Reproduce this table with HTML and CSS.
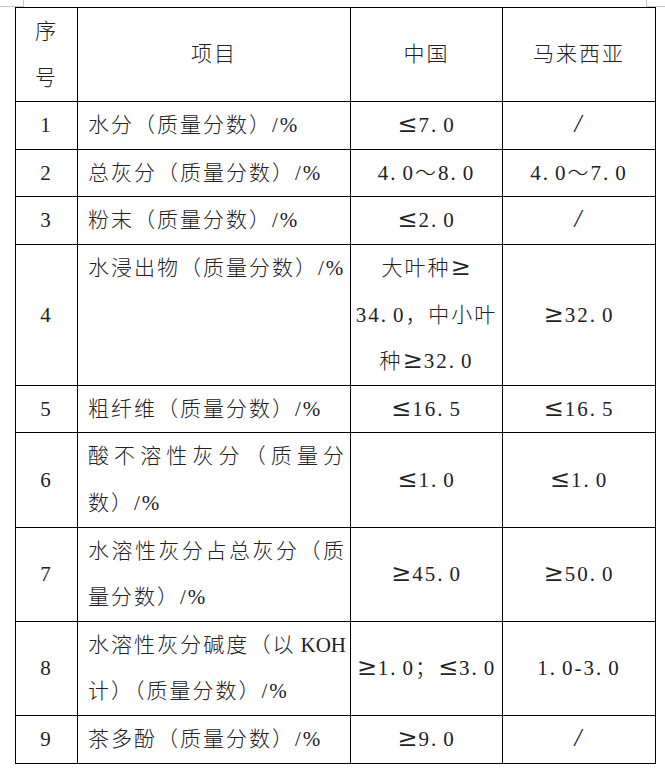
FILE: index.html
```html
<!DOCTYPE html>
<html lang="zh-CN">
<head>
<meta charset="utf-8">
<title>茶叶指标对比</title>
<link rel="stylesheet" href="styles.css">
</head>
<body>
<div class="page">
  <table class="spec">
    <colgroup>
      <col class="c-no">
      <col class="c-item">
      <col class="c-cn">
      <col class="c-my">
    </colgroup>
    <tr class="head">
      <td class="no">序号</td>
      <td class="center">项目</td>
      <td class="center">中国</td>
      <td class="center">马来西亚</td>
    </tr>
    <tr>
      <td class="no">1</td>
      <td class="item">水分（质量分数）/%</td>
      <td class="center"><span class="sym">≤</span>7<span class="pt">.</span>0</td>
      <td class="center"><span class="slash">/</span></td>
    </tr>
    <tr>
      <td class="no">2</td>
      <td class="item">总灰分（质量分数）/%</td>
      <td class="center">4<span class="pt">.</span>0～8<span class="pt">.</span>0</td>
      <td class="center">4<span class="pt">.</span>0～7<span class="pt">.</span>0</td>
    </tr>
    <tr>
      <td class="no">3</td>
      <td class="item">粉末（质量分数）/%</td>
      <td class="center"><span class="sym">≤</span>2<span class="pt">.</span>0</td>
      <td class="center"><span class="slash">/</span></td>
    </tr>
    <tr>
      <td class="no">4</td>
      <td class="item">水浸出物（质量分数）/%</td>
      <td class="center">大叶种<span class="sym">≥</span><br>34<span class="pt">.</span>0，中小叶<br>种<span class="sym">≥</span>32<span class="pt">.</span>0</td>
      <td class="center"><span class="sym">≥</span>32<span class="pt">.</span>0</td>
    </tr>
    <tr>
      <td class="no">5</td>
      <td class="item">粗纤维（质量分数）/%</td>
      <td class="center"><span class="sym">≤</span>16<span class="pt">.</span>5</td>
      <td class="center"><span class="sym">≤</span>16<span class="pt">.</span>5</td>
    </tr>
    <tr>
      <td class="no">6</td>
      <td class="item">酸不溶性灰分（质量分数）/%</td>
      <td class="center"><span class="sym">≤</span>1<span class="pt">.</span>0</td>
      <td class="center"><span class="sym">≤</span>1<span class="pt">.</span>0</td>
    </tr>
    <tr>
      <td class="no">7</td>
      <td class="item">水溶性灰分占总灰分（质量分数）/%</td>
      <td class="center"><span class="sym">≥</span>45<span class="pt">.</span>0</td>
      <td class="center"><span class="sym">≥</span>50<span class="pt">.</span>0</td>
    </tr>
    <tr>
      <td class="no">8</td>
      <td class="item">水溶性灰分碱度（以<span class="latin">KOH</span>计）（质量分数）/%</td>
      <td class="center"><span class="sym">≥</span>1<span class="pt">.</span>0；<span class="sym">≤</span>3<span class="pt">.</span>0</td>
      <td class="center">1<span class="pt">.</span>0-3<span class="pt">.</span>0</td>
    </tr>
    <tr>
      <td class="no">9</td>
      <td class="item">茶多酚（质量分数）/%</td>
      <td class="center"><span class="sym">≥</span>9<span class="pt">.</span>0</td>
      <td class="center"><span class="slash">/</span></td>
    </tr>
  </table>
</div>
</body>
</html>
```
FILE: styles.css
```css
html, body {
  margin: 0;
  padding: 0;
  background: #ffffff;
}

body {
  font-family: "Liberation Serif", "Noto Sans CJK SC", serif;
  font-size: 21px;
  color: #222222;
}

.page {
  position: relative;
  padding: 7px 0 0 15px;
}

/* page corner crop marks */
.page::before,
.page::after {
  content: "";
  position: absolute;
  top: 0;
  height: 6px;
  border-bottom: 1px solid #c8c8c8;
}
.page::before {
  left: 0;
  width: 23px;
  border-right: 1px solid #c8c8c8;
}
.page::after {
  left: 646px;
  right: 0;
  border-left: 1px solid #c8c8c8;
}

.spec {
  border-collapse: collapse;
  table-layout: fixed;
  width: 640px;
}

.c-no { width: 62px; }
.c-item { width: 273px; }
.c-cn { width: 152px; }
.c-my { width: 153px; }

.spec td {
  border: 1px solid #000000;
  padding: 0;
  line-height: 46.6px;
  vertical-align: middle;
  letter-spacing: 2px;
  font-weight: 300;
}

.spec .no {
  text-align: center;
  padding: 0 9px;
}

.spec .center {
  text-align: center;
  padding: 0 4px;
}

.spec .item {
  text-align: justify;
  vertical-align: top;
  padding: 0 4px 0 10px;
}

.sym {
  font-family: "DejaVu Serif", serif;
  font-size: 24px;
  line-height: 1;
  font-weight: 300;
  letter-spacing: 0;
  margin-right: 1px;
}

.pt {
  letter-spacing: 7px;
}

.latin {
  letter-spacing: 0;
  margin-left: 5px;
}

.slash {
  font-size: 25px;
  line-height: 1;
  font-style: italic;
}
```
